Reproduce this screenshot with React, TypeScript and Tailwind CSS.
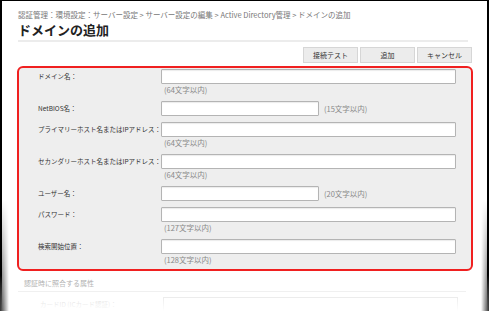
import React from 'react';

type Field = { label: string; short?: boolean; note: string };

const fields: Field[] = [
  { label: 'ドメイン名：', note: '(64文字以内)' },
  { label: 'NetBIOS名：', short: true, note: '(15文字以内)' },
  { label: 'プライマリーホスト名またはIPアドレス：', note: '(64文字以内)' },
  { label: 'セカンダリーホスト名またはIPアドレス：', note: '(64文字以内)' },
  { label: 'ユーザー名：', short: true, note: '(20文字以内)' },
  { label: 'パスワード：', note: '(127文字以内)' },
  { label: '検索開始位置：', note: '(128文字以内)' },
];

const font = { fontFamily: '"Noto Sans CJK JP", "Liberation Sans", sans-serif' };

const Input = ({ short }: { short?: boolean }) => (
  <div
    className={`shrink-0 h-[15px] bg-white border border-[#b4b4b4] rounded-[1px] shadow-[inset_0_1px_1px_rgba(0,0,0,0.08)] ${
      short ? 'w-[158px]' : 'w-[295px]'
    }`}
  />
);

const FieldRow = ({ field }: { field: Field }) => (
  <div className="flex flex-col">
    <div className="flex items-center">
      <div className="shrink-0 w-[142px] pl-[19px] text-[6.5px] text-[#333] whitespace-nowrap leading-none">{field.label}</div>
      <Input short={field.short} />
      {field.short && <span className="ml-[5px] text-[7.5px] text-[#888] leading-none whitespace-nowrap">{field.note}</span>}
    </div>
    {!field.short && (
      <div className="pl-[145px] h-[11px] flex items-center text-[7.5px] text-[#888] leading-none">{field.note}</div>
    )}
  </div>
);

const App: React.FC = () => {
  return (
    <div className="relative w-[489px] h-[311px] overflow-hidden bg-white" style={font}>
      <div className="h-full border-t border-l-2 border-r-2 border-black">
        <div className="pl-[16px] pr-[15px]">
          {/* Breadcrumb */}
          <div className="pt-[9px] text-[7.5px] text-[#777] leading-[10px] whitespace-nowrap">
            認証管理：環境設定：サーバー設定 &gt; サーバー設定の編集 &gt; Active Directory管理 &gt; ドメインの追加
          </div>
          {/* Title */}
          <h1 className="mt-[2px] text-[13px] font-bold text-[#222] leading-[16px]">ドメインの追加</h1>
          <div className="mt-[2px] h-[2px] bg-[#ececec] mr-[4px]" />

          {/* Buttons */}
          <div className="flex justify-end gap-[2px] mt-[5px]">
            {['接続テスト', '追加', 'キャンセル'].map((b) => (
              <button
                key={b}
                className="w-[55px] h-[16px] bg-[#ececec] border border-[#d6d6d6] text-[7px] text-[#333] leading-none"
              >
                {b}
              </button>
            ))}
          </div>

          {/* Highlighted form */}
          <div className="mt-[3px] -ml-[1px] w-[456px] border-2 border-[#f02020] rounded-[6px] bg-[#eeeeee] pt-px pb-[4px] flex flex-col gap-[6px]">
            {fields.map((f) => (
              <FieldRow key={f.label} field={f} />
            ))}
          </div>

          {/* Next section (faded) */}
          <div className="mt-[7px] pl-[6px] text-[7px] text-[#999] leading-[10px]">認証時に照合する属性</div>
          <div className="mt-[3px] h-px bg-[#e4e4e4] mr-[6px]" />
          <div className="mt-[5px] flex items-center">
            <div className="shrink-0 w-[145px] pl-[22px] text-[6.5px] text-[#999] leading-none whitespace-nowrap">カードID (ICカード認証)：</div>
            <div className="shrink-0 h-[15px] w-[295px] bg-white border border-[#ccc]" />
          </div>
        </div>
      </div>

      {/* bottom fade */}
      <div className="absolute left-0 right-0 bottom-0 h-[36px] bg-gradient-to-b from-white/0 via-white/50 to-white" />
      {/* side shadows */}
      <div className="absolute left-0 top-[200px] bottom-0 w-[9px] bg-gradient-to-r from-black/80 to-black/0 [mask-image:linear-gradient(to_bottom,transparent,black)]" />
      <div className="absolute right-0 top-[200px] bottom-0 w-[8px] bg-gradient-to-l from-black/80 to-black/0 [mask-image:linear-gradient(to_bottom,transparent,black)]" />
    </div>
  );
};

export default App;
